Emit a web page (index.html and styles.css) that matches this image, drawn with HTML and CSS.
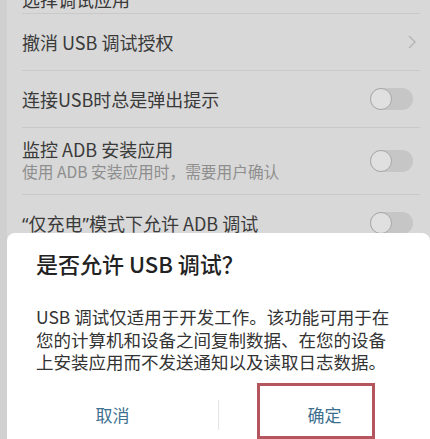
FILE: index.html
```html
<!DOCTYPE html>
<html lang="zh-CN">
<head>
    <meta charset="UTF-8">
    <meta name="viewport" content="width=device-width, initial-scale=1.0">
    <title>USB 调试</title>
    <link rel="stylesheet" href="styles.css">
</head>
<body>
    <div class="screen">
        <ul class="settings">
            <li class="row row-cut">
                <span class="title">选择调试应用</span>
            </li>
            <li class="row">
                <span class="title">撤消 USB 调试授权</span>
                <svg class="chevron" width="10" height="16" viewBox="0 0 10 16">
                    <path d="M2 2 L8 8 L2 14" fill="none" stroke="#b4b4b4" stroke-width="1.4"/>
                </svg>
            </li>
            <li class="row">
                <span class="title">连接USB时总是弹出提示</span>
                <span class="toggle"><span class="knob"></span></span>
            </li>
            <li class="row row-tall">
                <div class="text">
                    <span class="title">监控 ADB 安装应用</span>
                    <span class="subtitle">使用 ADB 安装应用时，需要用户确认</span>
                </div>
                <span class="toggle"><span class="knob"></span></span>
            </li>
            <li class="row">
                <span class="title"><span class="q">“</span>仅充电<span class="q">”</span>模式下允许 ADB 调试</span>
                <span class="toggle"><span class="knob"></span></span>
            </li>
        </ul>

        <!-- dialog sits over the bottom of the list -->
        <div class="dialog">
            <h2 class="dialog-title">是否允许 USB 调试？</h2>
            <p class="dialog-body">USB 调试仅适用于开发工作。该功能可用于在您的计算机和设备之间复制数据、在您的设备上安装应用而不发送通知以及读取日志数据。</p>
            <div class="dialog-buttons">
                <span class="btn">取消</span>
                <span class="sep"></span>
                <span class="btn">确定</span>
            </div>
            <div class="highlight"></div>
        </div>
    </div>
</body>
</html>
```

FILE: styles.css
```css
body {
    margin: 0;
    font-family: "Noto Sans CJK SC", "Noto Sans", sans-serif;
    background-color: #d0d0d0;
    overflow: hidden;
}
.screen {
    margin-left: 7px;
    height: 439px;
    background-color: #d8d8d8;
    overflow: hidden;
}
.settings {
    list-style-type: none;
    margin: 0;
    padding: 0 10px 0 15px;
}
.row {
    display: flex;
    align-items: center;
    justify-content: space-between;
    height: 56px;
    border-bottom: 1px solid #c9c9c9;
}
.row-cut {
    height: 13px;
    align-items: flex-end;
    overflow: hidden;
}
.row-cut .title {
    line-height: 20px;
    margin-bottom: 4px;
}
.row-tall {
    height: 66px;
}
.title {
    font-size: 18px;
    color: #3a3a3a;
}
.title .q {
    font-family: "Noto Sans", sans-serif;
}
.text {
    display: flex;
    flex-direction: column;
    gap: 2px;
    margin-top: -2px;
}
.text .title {
    line-height: 22px;
}
.subtitle {
    font-size: 15.7px;
    line-height: 20px;
    color: #8e8e8e;
}
.chevron {
    margin-right: 3px;
}
.toggle {
    display: flex;
    width: 43px;
    height: 22px;
    border-radius: 11px;
    background-color: #c6c6c6;
    margin-right: 7px;
}
.knob {
    width: 20px;
    height: 20px;
    border-radius: 50%;
    background-color: #e0e0e0;
    border: 1px solid #a9a9a9;
}
.dialog {
    position: fixed;
    left: 7px;
    right: 0;
    bottom: 0;
    height: 206px;
    background-color: #fff;
    border-radius: 8px 8px 0 0;
    padding: 0 22px 0 29px;
}
.dialog-title {
    margin: 16px 0 0;
    font-size: 22px;
    font-weight: 500;
    line-height: 28px;
    color: #222;
}
.dialog-body {
    max-width: 360px;
    margin: 29px 0 0;
    font-size: 17.5px;
    line-height: 22.5px;
    color: #333;
}
.dialog-buttons {
    display: flex;
    align-items: center;
    margin: 19px -22px 0 -29px;
    height: 44px;
}
.btn {
    flex: 1;
    text-align: center;
    font-size: 17px;
    color: #3d6f8f;
}
.sep {
    width: 1px;
    height: 30px;
    background-color: #e4e4e4;
}
.highlight {
    position: absolute;
    left: 250px;
    top: 150px;
    width: 112px;
    height: 50px;
    border: 3px solid #b5565f;
}
```
